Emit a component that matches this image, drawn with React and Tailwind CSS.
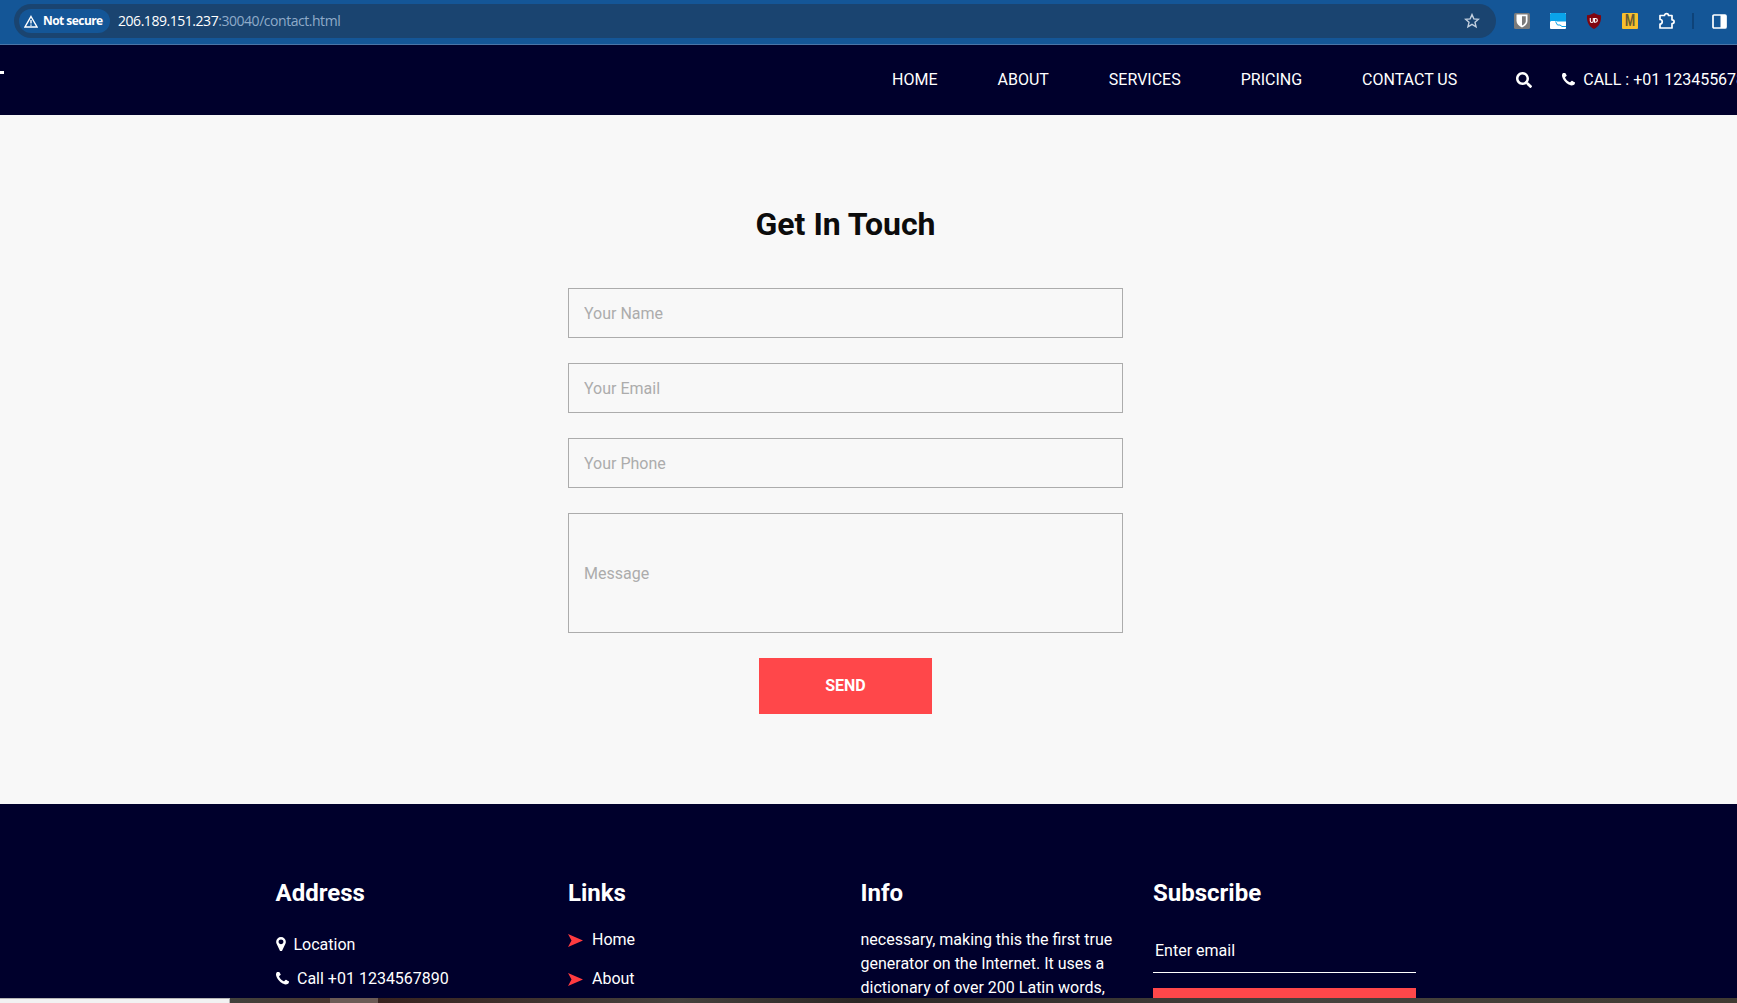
import { FaSearch } from "react-icons/fa";

const NAV = ["HOME", "ABOUT", "SERVICES", "PRICING", "CONTACT US"];

function Phone({ className }) {
  return (
    <svg viewBox="0 64 1408 1408" className={className} fill="currentColor">
      <path d="M1408 1112q0 27-10 70.500t-21 68.500q-21 50-122 106-94 51-186 51-27 0-53-3.500t-57.500-12.500-47-14.500-55.500-20.500-49-18q-98-35-175-83-127-79-264-216t-216-264q-48-77-83-175-3-9-18-49t-20.500-55.500-14.500-47-12.500-57.500-3.500-53q0-92 51-186 56-101 106-122 25-11 68.500-21t70.500-10q14 0 21 3 18 6 53 76 11 19 30 54t35 63.500 31 53.500q3 4 17.500 25t21.500 35.500 7 28.500q0 20-28.500 50t-62 55-62 53-28.500 46q0 9 5 22.500t8.500 20.500 14 24 11.500 19q76 137 174 235t235 174q2 1 19 11.500t24 14 20.500 8.500 22.500 5q18 0 46-28.500t53-62 55-62 50-28.500q14 0 28.500 7t35.500 21.500 25 17.500q25 15 53.500 31t63.500 35 54 30q70 35 76 53 3 7 3 21z" />
    </svg>
  );
}

function Pin() {
  return (
    <svg viewBox="0 0 1024 1536" className="mb-[2px] h-[14.500px] w-[10px]" fill="currentColor">
      <path d="M768 512q0-106-75-181t-181-75-181 75-75 181 75 181 181 75 181-75 75-181zm256 0q0 109-33 179l-364 774q-16 33-47.500 52t-67.500 19-67.500-19-46.500-52l-365-774q-33-70-33-179 0-212 150-362t362-150 362 150 150 362z" />
    </svg>
  );
}

function BrowserBar() {
  return (
    <div className="flex h-[45px] shrink-0 items-start border-b border-[#4a75a8] bg-[#145697] pt-1 pl-[14px]">
      <div className="flex h-[34px] w-[1482px] items-center rounded-full bg-[#1a4470] pr-4 pl-[5px]">
        <div className="flex h-6 w-[91px] items-center rounded-full bg-[#145697] pl-[5px] font-['Open_Sans',sans-serif] text-[12px] font-bold tracking-[-0.550px] text-white">
          <svg viewBox="0 0 14 13" className="mr-[5px] h-[13px] w-[14px] shrink-0" fill="none" stroke="currentColor" strokeWidth="1.400">
            <path d="M7 1.500 13 12H1ZM7 5v3.500M7 9.500v1.300" />
          </svg>
          <span className="whitespace-nowrap">Not secure</span>
        </div>
        <div className="mb-px ml-2 font-['Open_Sans',sans-serif] text-[14px] tracking-[-0.460px] text-[#8fabc9]">
          <span className="text-white">206.189.151.237</span>:30040/contact.html
        </div>
        <svg viewBox="0 0 16 16" className="ml-auto h-4 w-4" fill="none" stroke="#c3d0df" strokeWidth="1.400">
          <path d="m8 1.600 1.850 4.250 4.650.4-3.500 3.050 1.050 4.500L8 11.400 3.950 13.800 5 9.300 1.500 6.250l4.650-.4Z" />
        </svg>
      </div>
      <div className="flex h-[34px] items-center pl-[18px]">
        <svg viewBox="0 0 16 16" className="h-4 w-4">
          <rect width="16" height="16" rx="1.500" fill="#7b7b7b" />
          <path d="M2.500 1.500h11V8c0 3-2.500 5-5.500 6.500C5 13 2.500 11 2.500 8Z" fill="#fff" />
          <path d="M8 3.300h3.800V8c0 2-1.600 3.400-3.800 4.600Z" fill="#7b7b7b" />
        </svg>
        <svg viewBox="0 0 16 16" className="ml-5 h-4 w-4">
          <rect width="16" height="16" rx="1" fill="#fff" />
          <path d="M1 0h14l1 1v7.500H0V1Z" fill="#0aa3ea" />
          <path d="M1 8h5.500v4H1Z" fill="#fff" />
          <path d="M5.500 8.500 7.500 12H10l2 1.500h4" fill="none" stroke="#0aa3ea" />
        </svg>
        <svg viewBox="0 0 16 16" className="ml-5 h-4 w-4">
          <path d="M8 0c2 1.300 4 2 7 2.200C15.500 9 13 13.500 8 16 3 13.500.5 9 1 2.200 4 2 6 1.300 8 0Z" fill="#800610" />
          <path d="M4.300 5v3a1.300 1.300 0 0 0 3 0V5M8.500 5.500v3.700h1a1.800 1.800 0 0 0 0-3.700Z" fill="none" stroke="#fff" strokeWidth="1.100" />
        </svg>
        <div className="ml-5 flex h-4 w-4 items-center justify-center rounded-[1px] bg-[#f7c02d] font-['Roboto',sans-serif] text-[16px] leading-none font-bold text-[#665a35]">
          <span className="scale-x-[0.72]">M</span>
        </div>
        <svg viewBox="0 0 18 18" className="ml-5 h-[18px] w-[18px]" fill="none" stroke="#fff" strokeWidth="1.700">
          <path d="M2 3.500h4.500C6.500 1 10.500 1 10.500 3.500H14v4.300c2.800 0 2.800 3.800 0 3.800V16H2v-4c3 0 3-4.500 0-4.500Z" strokeLinejoin="round" />
        </svg>
        <div className="ml-4 h-4 w-[2px] bg-[#0e4379]" />
        <svg viewBox="0 0 15 15" className="ml-[18px] h-[15px] w-[15px]">
          <rect x="1" y="1" width="13" height="13" rx="1" fill="none" stroke="#fff" strokeWidth="1.700" />
          <path d="M8.500 1H14v13H8.500Z" fill="#fff" />
        </svg>
      </div>
    </div>
  );
}

function Header() {
  return (
    <header className="flex h-[70px] shrink-0 items-center overflow-hidden bg-[#00002c] text-[16px] text-white">
      <div className="mb-[15px] h-[3px] w-1 shrink-0 bg-white" />
      <nav className="ml-[888px] flex gap-[60px] whitespace-nowrap">
        {NAV.map((item) => (
          <a key={item}>{item}</a>
        ))}
      </nav>
      <FaSearch className="ml-[59px] h-4 w-4 shrink-0" />
      <a className="ml-[30px] flex shrink-0 items-center whitespace-nowrap">
        <Phone className="mr-[8px] mb-[2px] h-[13px] w-[13px]" />
        CALL : +01 123455678
      </a>
    </header>
  );
}

function Contact() {
  const input =
    "block w-full border border-[#acacac] bg-transparent px-[15px] text-[16px] outline-none placeholder:text-[#acacac]";
  return (
    <main className="h-[689px] shrink-0 bg-[#f8f8f8] pt-[90px] pl-[568px]">
      <form className="flex w-[555px] flex-col items-center gap-[25px]">
        <h2 className="mb-[20px] h-[38px] text-[32px] leading-[38px] font-bold text-[#0c0c0c]">Get In Touch</h2>
        <input className={input + " h-[50px]"} placeholder="Your Name" />
        <input className={input + " h-[50px]"} placeholder="Your Email" />
        <input className={input + " h-[50px]"} placeholder="Your Phone" />
        <input className={input + " h-[120px]"} placeholder="Message" />
        <button type="button" className="h-14 w-[173px] bg-[#ff474a] text-[16px] font-bold text-white">
          SEND
        </button>
      </form>
    </main>
  );
}

function Footer() {
  const title = "h-[29px] text-[24px] leading-[29px] font-bold";
  return (
    <footer className="min-h-0 flex-1 overflow-hidden bg-[#00002c] pt-[75px] pl-[275.500px] text-[16px] leading-6 text-white">
      <div className="grid w-[1140px] grid-cols-4 gap-[30px]">
        <section>
          <h3 className={title}>Address</h3>
          <div className="mt-[25px] flex items-center gap-[8px]">
            <Pin />
            Location
          </div>
          <div className="mt-[10px] flex items-center gap-[8.500px]">
            <Phone className="mb-[2px] h-[13px] w-[13px]" />
            Call +01 1234567890
          </div>
        </section>
        <section>
          <h3 className={title}>Links</h3>
          <div className="mt-[20px] flex flex-col gap-[15px]">
            {["Home", "About"].map((item) => (
              <a key={item} className="flex items-center gap-[9px]">
                <svg viewBox="0 0 15 13" className="mt-px h-[13px] w-[15px]" fill="#ff3b40">
                  <path d="M0 0 15 6.500 0 13 3.500 6.500Z" />
                </svg>
                {item}
              </a>
            ))}
          </div>
        </section>
        <section>
          <h3 className={title}>Info</h3>
          <p className="mt-[20px] whitespace-nowrap">
            necessary, making this the first true
            <br />
            generator on the Internet. It uses a
            <br />
            dictionary of over 200 Latin words,
          </p>
        </section>
        <section>
          <h3 className={title}>Subscribe</h3>
          <input
            className="mt-[20px] block h-[45px] w-full border-b border-white bg-transparent px-[2px] outline-none placeholder:text-white"
            placeholder="Enter email"
          />
          <div className="mt-[15px] h-[45px] bg-[#ff474a]" />
        </section>
      </div>
    </footer>
  );
}

export default function App() {
  return (
    <div className="flex h-[1003px] w-[1737px] flex-col overflow-hidden font-['Roboto',sans-serif]">
      <BrowserBar />
      <Header />
      <Contact />
      <Footer />
      <div className="flex h-[5px] shrink-0">
        <div className="w-[230px] border-t border-r border-[#b5b5b5] bg-[#f2f2f2]" />
        <div className="w-[100px] bg-linear-to-r from-[#41413c] to-[#4a3730]" />
        <div className="w-12 bg-[#6b5a55]" />
        <div className="w-[300px] bg-linear-to-r from-[#38231f] to-[#45413d]" />
        <div className="w-[180px] bg-linear-to-r from-[#45413d] to-[#2b2624]" />
        <div className="flex-1 bg-linear-to-r from-[#2b2624] via-[#45423d] to-[#403a32]" />
      </div>
    </div>
  );
}
